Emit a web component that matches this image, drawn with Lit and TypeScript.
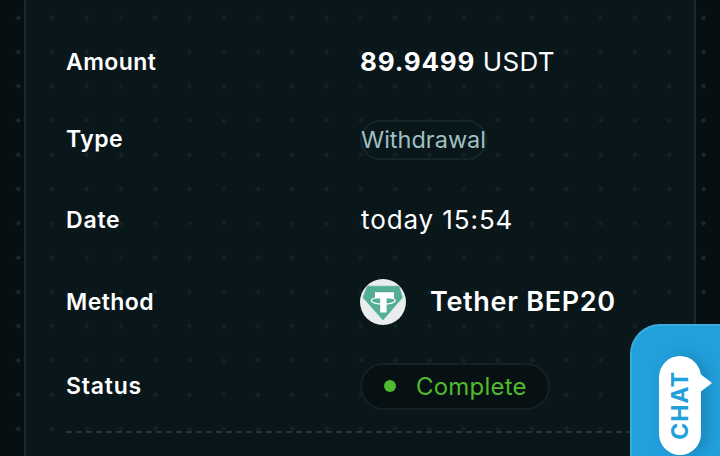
import { LitElement, html, css, svg } from "lit";
import { customElement } from "lit/decorators.js";

const tether = svg`<svg class="coin" width="46" height="46" viewBox="0 0 46 46">
  <circle cx="23" cy="23" r="23" fill="#e9eded"/>
  <path d="M7.2 7.2 H39 L42.4 18.5 L23 41 L3 18.5 Z" fill="#53ae94" stroke="#53ae94" stroke-width="0.6" stroke-linejoin="round"/>
  <path d="M15 13.2 H34 V19.6 H26.6 V33.5 H20.2 V19.6 H15 Z" fill="#fff"/>
  <ellipse cx="23.3" cy="21.6" rx="12" ry="3.6" fill="none" stroke="#fff" stroke-width="1.1"/>
</svg>`;

@customElement("app-root")
export class AppRoot extends LitElement {
  static styles = css`
    :host {
      display: block;
      position: relative;
      width: 720px;
      height: 456px;
      overflow: hidden;
      font-family: Inter, "Liberation Sans", sans-serif;
      background-color: #060f11;
      background-image: radial-gradient(circle at center, #1c2a2d 1.9px, transparent 2.3px);
      background-size: 34.28px 34.28px;
      background-position: 1.1px 0.6px;
    }
    .card {
      box-sizing: border-box;
      width: 672px;
      height: 456px;
      margin-left: 24px;
      border-left: 2px solid #1a282b;
      border-right: 2px solid #1a282b;
      background: rgba(13, 29, 34, 0.55);
      padding: 43px 40px 0;
      display: flex;
      flex-direction: column;
    }
    .row {
      display: grid;
      grid-template-columns: 294px 1fr;
      align-items: center;
      color: #fff;
    }
    .r1 { height: 38px; }
    .r2 { height: 38px; margin-top: 39px; }
    .r3 { height: 38px; margin-top: 43px; }
    .r4 { height: 46px; margin-top: 40px; }
    .r5 { height: 47px; margin-top: 38px; }
    .label {
      font-size: 23px;
      font-weight: 600;
      letter-spacing: 0.45px;
    }
    .r2 .label, .r5 .label { padding-bottom: 2px; }
    .r3 .label, .r5 .label { letter-spacing: 0.8px; }
    .value {
      font-size: 26px;
      font-weight: 400;
      padding-bottom: 2px;
    }
    .amount { letter-spacing: 0.3px; }
    .date { letter-spacing: 0.9px; margin-left: 1px; }
    .amount b { font-weight: 700; letter-spacing: 0.8px; }
    .type {
      justify-self: start;
      box-sizing: border-box;
      height: 40px;
      width: 127px;
      display: flex;
      align-items: center;
      justify-content: center;
      border: 2px solid #15262b;
      border-radius: 20px;
      padding-bottom: 2px;
      font-size: 23.5px;
      color: #9fc1c3;
      white-space: nowrap;
    }
    .method {
      display: flex;
      align-items: center;
      gap: 24px;
      font-weight: 600;
      font-size: 27px;
      letter-spacing: 0.7px;
    }
    .method-name { padding-bottom: 2px; }
    .coin { flex: none; display: block; }
    .status {
      justify-self: start;
      box-sizing: border-box;
      width: 190px;
      height: 47px;
      display: flex;
      align-items: center;
      gap: 20px;
      padding-left: 22px;
      padding-bottom: 1px;
      border: 2px solid #142125;
      border-radius: 24px;
      background: #071012;
      color: #4fb92f;
      font-size: 24px;
      letter-spacing: 0.2px;
    }
    .dot {
      width: 12px;
      height: 12px;
      border-radius: 50%;
      background: #4fb92f;
    }
    .dash {
      margin-top: 21px;
      height: 2px;
      background: repeating-linear-gradient(90deg, #263538 0 6px, transparent 6px 10px);
    }
    .chat {
      position: absolute;
      left: 630px;
      top: 324px;
      width: 100px;
      height: 140px;
      box-sizing: border-box;
      border-top-left-radius: 30px;
      background: #22a0dc;
      border: 2px solid #38abe3;
      border-right: 0;
      border-bottom: 0;
    }
    .pill {
      position: absolute;
      left: 27px;
      top: 30px;
      width: 42px;
      height: 99px;
      border-radius: 21px;
      background: #fff;
      display: flex;
      align-items: center;
      justify-content: center;
      box-shadow: 6px 0 14px rgba(10, 70, 110, 0.3);
    }
    .tail {
      position: absolute;
      left: 40px;
      top: 17px;
      width: 0;
      height: 0;
      border-left: 13px solid #fff;
      border-top: 10px solid transparent;
      border-bottom: 10px solid transparent;
    }
    .chat-t {
      writing-mode: vertical-rl;
      transform: rotate(180deg);
      font-size: 23px;
      font-weight: 700;
      letter-spacing: 1px;
      color: #22a0dc;
    }
  `;

  render() {
    return html`
      <div class="card">
        <div class="row r1"><span class="label">Amount</span><span class="value amount"><b>89.9499</b> USDT</span></div>
        <div class="row r2"><span class="label">Type</span><span class="type">Withdrawal</span></div>
        <div class="row r3"><span class="label">Date</span><span class="value date">today 15:54</span></div>
        <div class="row r4"><span class="label">Method</span><span class="method">${tether}<span class="method-name">Tether BEP20</span></span></div>
        <div class="row r5"><span class="label">Status</span><span class="status"><i class="dot"></i>Complete</span></div>
        <div class="dash"></div>
      </div>
      <div class="chat"><div class="pill"><span class="tail"></span><span class="chat-t">CHAT</span></div></div>
    `;
  }
}
